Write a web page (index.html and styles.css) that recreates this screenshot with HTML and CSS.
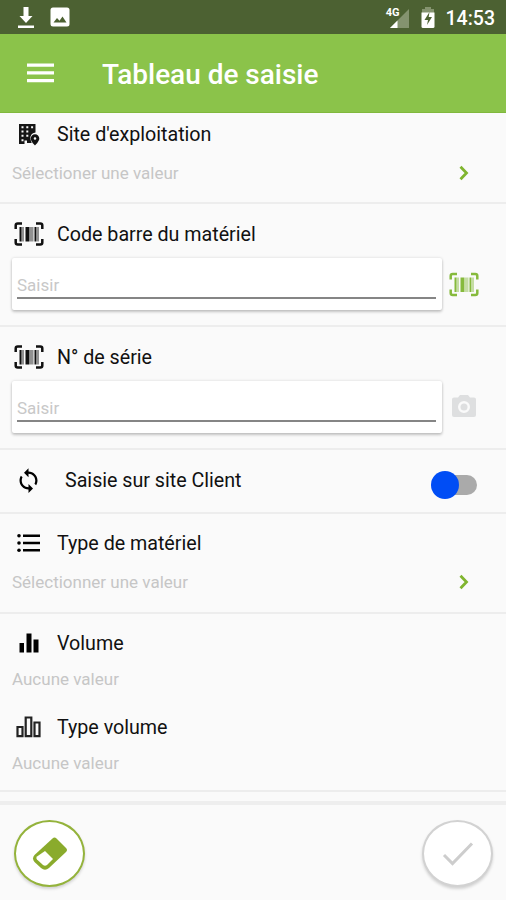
FILE: index.html
```html
<!DOCTYPE html>
<html lang="fr">
<head>
<meta charset="utf-8">
<title>Tableau de saisie</title>
<link rel="stylesheet" href="styles.css">
</head>
<body>
<svg width="0" height="0" class="defs" aria-hidden="true">
  <symbol id="barcode" viewBox="0 0 30 24">
    <path d="M8 1.500H3.700Q1.700 1.500 1.700 3.500V7M22 1.500h4.300q2 0 2 2V7M8 22.500H3.700q-2 0-2-2V17M22 22.500h4.300q2 0 2-2V17" fill="none" stroke="currentColor" stroke-width="2.500"/>
    <path d="M5.500 5h2v14.500h-2zM11.500 5h4v14.500h-4zM20.500 5h2v14.500h-2z" fill="currentColor"/>
    <path d="M7.500 5h2.500v14.500H7.500zM16 5h3.500v14.500H16zM23 5h2v14.500h-2z" fill="currentColor" opacity=".45"/>
  </symbol>
</svg>
<div class="screen">
  <div class="status">
    <svg class="download" width="18" height="24" viewBox="0 0 18 24" fill="#fff"><path d="M6.500 1h5v9h4L9 17 2.500 10h4z"/><path d="M1 19.500h16v2.500H1z"/></svg>
    <svg class="image" width="20" height="20" viewBox="0 0 20 20"><rect x=".5" y=".5" width="19" height="19" rx="2.500" fill="#fff"/><path d="M3.500 15.500 7 11l2.500 2.800 3-4.300 4 6z" fill="#4c6132"/></svg>
    <span class="spacer"></span>
    <span class="network">4G</span>
    <svg class="signal" width="19" height="19" viewBox="0 0 19 19"><path d="M19 0v19H0z" fill="#84936f"/><path d="M7.500 11.500V19H0z" fill="#fff"/></svg>
    <svg class="battery" width="14" height="21" viewBox="0 0 14 21"><path d="M4 0h6v2h3v5H1V2h3z" fill="#84936f"/><path d="M.500 5.500h13v14q0 1.500-1.500 1.500H2q-1.500 0-1.500-1.500z" fill="#fff"/><path d="M8.500 5 3.500 13H7l-1 5 5-8H7.700z" fill="#4c6132"/></svg>
    <span class="clock">14:53</span>
  </div>
  <header class="appbar">
    <svg width="27" height="20" viewBox="0 0 27 20" fill="#fff"><path d="M0 .5h27v3.200H0zM0 8.300h27v3.200H0zM0 16h27v3.200H0z"/></svg>
    <h1>Tableau de saisie</h1>
  </header>
  <main>
    <section class="site">
      <div class="label"><span class="icon"><svg width="22" height="23" viewBox="0 0 22 23"><path fill-rule="evenodd" d="M1 1h16.500v8.500q-6 1-5 7l1.200 3.500H9v-2.500H6.500V21H1zM3.500 3.200v2h2v-2zm4.800 0v2h2v-2zm4.800 0v2h2v-2zM3.500 7.500v2h2v-2zm4.800 0v2h2v-2zM3.500 11.800v2h2v-2zm4.800 0v2h2v-2zM3.500 16.200v2h2v-2z" fill="#161616"/><path fill-rule="evenodd" d="M17 11.200a4.300 4.300 0 0 1 4.300 4.300c0 3-4.300 7-4.300 7s-4.300-4-4.300-7a4.300 4.300 0 0 1 4.300-4.300zm0 3a1.300 1.300 0 1 0 0 2.600 1.300 1.300 0 0 0 0-2.600z" fill="#111"/></svg></span><span>Site d'exploitation</span></div>
      <div class="hint"><span>Sélectioner une valeur</span><svg class="chevron" width="10" height="16" viewBox="0 0 10 16"><path d="m1.500 1.800 6 6.200-6 6.200"/></svg></div>
    </section>
    <section class="entry">
      <div class="label"><span class="icon"><svg width="30" height="24"><use href="#barcode"/></svg></span><span>Code barre du matériel</span></div>
      <div class="field"><div class="card"><div class="input">Saisir</div></div><svg class="scan" width="30" height="25"><use href="#barcode"/></svg></div>
    </section>
    <section class="entry">
      <div class="label"><span class="icon"><svg width="30" height="24"><use href="#barcode"/></svg></span><span>N° de série</span></div>
      <div class="field"><div class="card"><div class="input">Saisir</div></div><svg class="camera" width="24" height="22" viewBox="0 0 24 22"><path fill-rule="evenodd" d="M8 0h8l2 2.500h4q2 0 2 2V20q0 2-2 2H2q-2 0-2-2V4.500q0-2 2-2h4zm4 6a6 6 0 1 0 0 12 6 6 0 0 0 0-12z" fill="#dedfe0"/><circle cx="12" cy="12" r="3.500" fill="#dedfe0"/></svg></div>
    </section>
    <section class="toggle">
      <div class="label"><span class="icon"><svg width="27" height="27" viewBox="0 0 24 24"><path d="M12 4V1L8 5l4 4V6c3.310 0 6 2.690 6 6 0 1.010-.250 1.970-.700 2.800l1.460 1.460C19.540 15.030 20 13.570 20 12c0-4.420-3.580-8-8-8zm0 14c-3.310 0-6-2.690-6-6 0-1.010.250-1.970.700-2.800L5.240 7.740C4.460 8.970 4 10.430 4 12c0 4.420 3.580 8 8 8v3l4-4-4-4z"/></svg></span><span>Saisie sur site Client</span></div>
      <div class="switch"><div class="thumb"></div><div class="track"></div></div>
    </section>
    <section class="type">
      <div class="label"><span class="icon"><svg width="23" height="20" viewBox="0 0 23 20"><path d="M6 1.500h17v2.400H6zM6 8.800h17v2.400H6zM6 16.100h17v2.400H6z"/><circle cx="2" cy="2.700" r="1.800"/><circle cx="2" cy="10" r="1.800"/><circle cx="2" cy="17.300" r="1.800"/></svg></span><span>Type de matériel</span></div>
      <div class="hint"><span>Sélectionner une valeur</span><svg class="chevron" width="10" height="16" viewBox="0 0 10 16"><path d="m1.500 1.800 6 6.200-6 6.200"/></svg></div>
    </section>
    <section class="volumes">
      <div class="label"><span class="icon"><svg width="20" height="20" viewBox="0 0 20 20"><path d="M.500 10h4.500v9.500H.500zM7.500.500h5v19h-5zM14.500 6.500h5v13h-5z"/></svg></span><span>Volume</span></div>
      <div class="hint"><span>Aucune valeur</span></div>
      <div class="label second"><span class="icon"><svg width="25" height="22" viewBox="0 0 25 22"><path d="M1.500 11h5v9.200h-5zM9.700 1.500h5.600v18.700H9.700zM18.500 6.500h5v13.700h-5z" fill="none" stroke="#222" stroke-width="2.200"/></svg></span><span>Type volume</span></div>
      <div class="hint"><span>Aucune valeur</span></div>
    </section>
  </main>
  <footer>
    <div class="round erase"><svg width="36" height="34" viewBox="0 0 36 34"><path d="M20.500 1.500q2-1.800 4 0l9.500 9.500q2 2 0 4L17 31q-4 3.500-8 0l-6.500-6q-3-3.500 0-7z" fill="#8aab2c"/><path d="m13 14 8 8-6 6q-2 1.500-4 0l-6-5.500q-1.500-1.500 0-3z" fill="#fff"/></svg></div>
    <div class="round confirm"><svg width="32" height="26" viewBox="0 0 32 26"><path d="m2 14 8.500 8.500L30 2.500" fill="none" stroke="#cdcdcd" stroke-width="3"/></svg></div>
  </footer>
</div>
</body>
</html>
```
FILE: styles.css
```css
* { box-sizing: border-box; }
body { margin: 0; font-family: Roboto, "Liberation Sans", sans-serif; background: #fafafa; }
svg { display: block; flex: none; }
.defs { position: absolute; }
.screen { width: 506px; height: 900px; display: flex; flex-direction: column; overflow: hidden; }
.status { height: 34px; flex: none; background: #4c6132; display: flex; align-items: center; padding: 0 11px 0 17px; color: #fff; }
.download { margin-top: 1px; }
.image { margin-left: 15px; }
.spacer { flex: 1; }
.network { font-size: 11px; line-height: 12px; font-weight: 700; align-self: flex-start; margin: 7px -10px 0 0; z-index: 1; }
.signal { margin-top: 3px; margin-right: 3px; }
.battery { margin: 1px 11px 0 9px; }
.clock { font-size: 19.500px; font-weight: 500; margin-top: 2px; }
.appbar { height: 79px; flex: none; background: #8bc34a; border-bottom: 1px solid #80b83d; display: flex; align-items: center; padding: 0 27px; color: #fff; }
.appbar svg { margin-top: -1px; }
h1 { margin: 4px 0 0 48px; font-size: 28px; font-weight: 500; line-height: 32px; letter-spacing: -.02px; }
main { height: 688px; flex: none; }
section { border-bottom: 2px solid #ededed; }
.label { height: 24px; display: flex; align-items: center; font-size: 19.700px; letter-spacing: -.02px; color: #111; }
.icon { width: 57px; flex: none; display: flex; justify-content: center; }
.hint { display: flex; align-items: center; justify-content: space-between; height: 22px; padding: 0 37px 0 12px; font-size: 17px; color: #c6c6c6; }
.chevron path { fill: none; stroke: #80b52f; stroke-width: 2.800; }
.site { height: 91px; padding-top: 9px; }
.site .hint { margin-top: 16px; }
.entry { height: 123px; padding-top: 18px; }
.field { display: flex; align-items: center; margin-top: 12px; padding-left: 12px; }
.card { width: 430px; height: 52px; padding: 16px 6px 0 5px; background: #fff; border-radius: 2px; box-shadow: 0 2px 3px rgba(0,0,0,.2), 0 0 3px rgba(0,0,0,.14); }
.input { height: 25px; border-bottom: 2px solid #858585; font-size: 17px; line-height: 22px; color: #c8c8c8; }
.scan { margin-left: 7px; color: #86ba3c; }
.camera { margin-left: 10px; margin-top: -3px; }
.toggle { height: 64px; display: flex; justify-content: space-between; padding: 18px 29px 0 0; }
.toggle .icon { margin-right: 8px; }
.switch { width: 46px; height: 28px; margin-top: 3px; display: flex; align-items: center; }
.thumb { width: 28px; height: 28px; flex: none; border-radius: 50%; background: #004df5; z-index: 1; }
.track { width: 32px; height: 20px; flex: none; margin-left: -14px; border-radius: 10px; background: #aaa; }
.type { height: 100px; padding-top: 17px; }
.type .hint { margin-top: 16px; }
.volumes { height: 178px; padding-top: 17px; }
.volumes .hint { margin-top: 13px; }
.second { margin-top: 25px; }
footer { flex: 1; border-top: 4px solid #eee; display: flex; justify-content: space-between; padding: 15px 13px 0 14px; }
.round { width: 71px; height: 67px; border-radius: 50%; background: #fff; border: 2px solid #94b33b; display: flex; align-items: center; justify-content: center; box-shadow: 0 2px 3px rgba(0,0,0,.16); }
.confirm { border-color: #d2d2d2; }
```
